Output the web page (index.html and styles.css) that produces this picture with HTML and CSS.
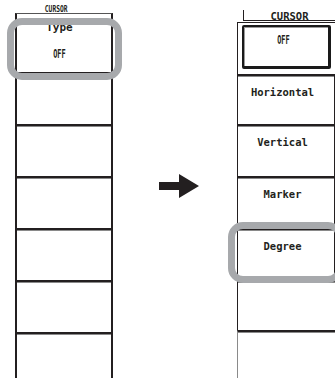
FILE: index.html
```html
<!DOCTYPE html>
<html>
<head>
<meta charset="utf-8">
<link rel="stylesheet" href="styles.css">
</head>
<body>
<div class="page">
  <div class="panel-left">
    <div class="tab-left"><span class="cond">CURSOR</span></div>
    <div class="lcell-top">
      <span class="type">Type</span>
      <span class="cond off off-l">OFF</span>
    </div>
    <div class="lcell"></div>
    <div class="lcell"></div>
    <div class="lcell"></div>
    <div class="lcell"></div>
    <div class="lcell"></div>
    <div class="lcell"></div>
  </div>

  <div class="arrow">
    <svg width="40" height="24" viewBox="0 0 40 24"><polygon points="0,8 20,8 20,0 40,12 20,24 20,16 0,16" fill="#231f20"/></svg>
  </div>

  <div class="panel-right">
    <div class="tab-right">CURSOR</div>
    <div class="rcell-top"><div class="btn"><span class="cond off">OFF</span></div></div>
    <div class="rcell first">Horizontal</div>
    <div class="rcell">Vertical</div>
    <div class="rcell">Marker</div>
    <div class="rcell">Degree</div>
    <div class="rcell empty"></div>
    <div class="rcell last"></div>
  </div>

  <div class="hl hl-left"></div>
  <div class="hl hl-right"></div>
</div>
</body>
</html>
```

FILE: styles.css
```css
html, body {
  margin: 0;
  padding: 0;
  background: #ffffff;
}
body {
  width: 335px;
  height: 378px;
  overflow: hidden;
  font-family: "DejaVu Sans Mono", "Liberation Mono", monospace;
  font-weight: bold;
  font-size: 10.5px;
  color: #231f20;
}
.page {
  position: relative;
  display: flex;
  align-items: flex-start;
  width: 335px;
  height: 378px;
  overflow: hidden;
}
.cond {
  display: inline-block;
  transform: scaleX(0.66);
}
.off {
  font-size: 11.5px;
  transform: scaleX(0.6);
}

/* left panel */
.panel-left {
  margin-left: 15px;
  margin-top: 4px;
  width: 98px;
  height: 380px;
  box-sizing: border-box;
  display: flex;
  flex-direction: column;
  flex-shrink: 0;
}
.tab-left {
  height: 9px;
  text-align: center;
  padding-right: 16px;
  line-height: 9px;
  font-size: 9.5px;
}
.lcell-top {
  height: 59px;
  box-sizing: border-box;
  border-top: 1px solid #555;
  border-left: 2px solid #231f20;
  border-right: 2px solid #231f20;
  display: flex;
  flex-direction: column;
  align-items: center;
  padding-right: 9px;
  padding-top: 8px;
  line-height: 11px;
}
.type {
  font-size: 11px;
}
.off-l {
  margin-top: 16px;
}
.lcell {
  height: 52px;
  flex-shrink: 0;
  box-sizing: border-box;
  border-top: 2px solid #231f20;
  border-left: 2px solid #231f20;
  border-right: 2px solid #231f20;
  box-shadow: inset 0 1px 0 #8a8a8a;
}

/* arrow */
.arrow {
  margin-left: 46px;
  margin-top: 174px;
  width: 40px;
  height: 24px;
  flex-shrink: 0;
}
.arrow svg {
  display: block;
}

/* right panel */
.panel-right {
  margin-left: 38px;
  margin-top: 10px;
  width: 98px;
  flex-shrink: 0;
  display: flex;
  flex-direction: column;
}
.tab-right {
  height: 11px;
  box-sizing: border-box;
  margin-left: 6px;
  margin-right: -2px;
  padding-top: 1px;
  line-height: 10px;
  border-left: 1px solid #231f20;
  border-bottom: 1px solid #231f20;
  text-align: center;
  padding-right: 2px;
}
.rcell-top {
  margin-top: 1px;
  height: 52px;
  box-sizing: border-box;
  border-top: 1px solid #231f20;
  border-left: 1px solid #231f20;
  margin-right: -2px;
  padding: 2px 6px 0 4px;
}
.btn {
  height: 44px;
  box-sizing: border-box;
  border: 2px solid #1a1a1a;
  border-right-width: 3px;
  border-bottom-width: 3px;
  border-radius: 2px;
  box-shadow: inset 1px 1px 0 #9a9a9a;
  display: flex;
  justify-content: center;
  padding-top: 8px;
  padding-right: 6px;
  line-height: 11px;
}
.rcell {
  height: 52px;
  flex-shrink: 0;
  box-sizing: border-box;
  border-top: 2px solid #231f20;
  border-left: 1px solid #231f20;
  border-right: 1px solid #231f20;
  box-shadow: inset 0 1px 0 #8a8a8a;
  display: flex;
  justify-content: center;
  padding-top: 11px;
  padding-right: 7px;
  line-height: 11px;
  white-space: nowrap;
}
.rcell.first {
  height: 50px;
}
.rcell.empty {
  height: 50px;
  border-right: none;
}
.rcell.last {
  height: 60px;
  border-right: none;
  border-left-color: #8a8a8a;
}

/* highlight frames */
.hl {
  position: absolute;
  box-sizing: border-box;
  border: 7px solid #a7a9ac;
  border-radius: 15px;
}
.hl-left {
  left: 7px;
  top: 18px;
  width: 115px;
  height: 62px;
}
.hl-right {
  left: 228px;
  top: 222px;
  width: 115px;
  height: 61px;
}
```
